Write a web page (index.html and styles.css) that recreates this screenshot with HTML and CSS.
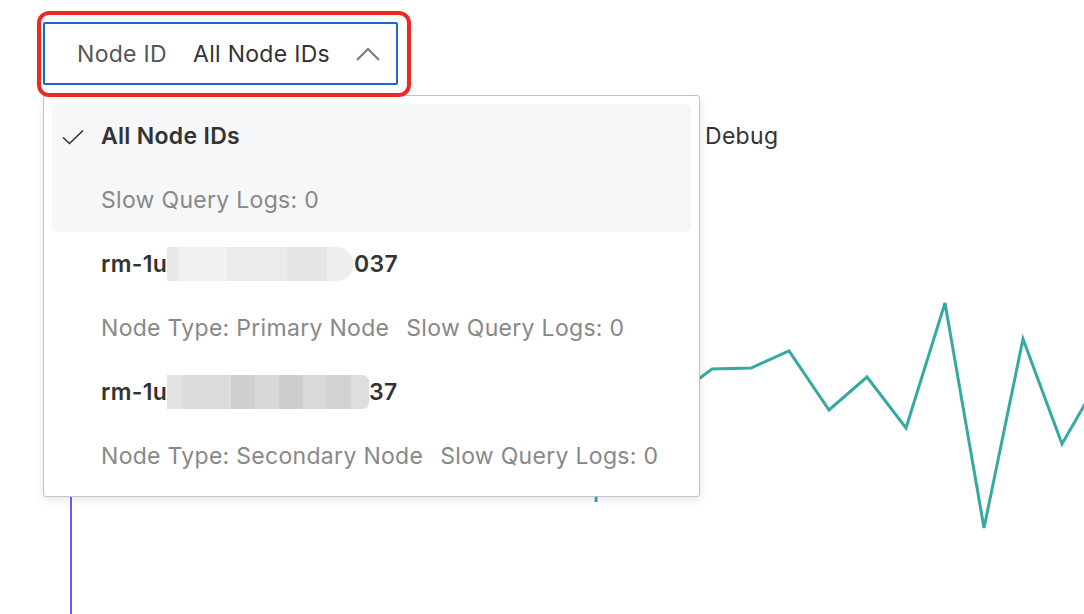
FILE: index.html
```html
<!DOCTYPE html>
<html lang="en">
<head>
    <meta charset="UTF-8">
    <meta name="viewport" content="width=device-width, initial-scale=1.0">
    <title>Slow Query Logs</title>
    <link rel="stylesheet" href="styles.css">
</head>
<body>
    <div class="toolbar">
        <div class="select-wrap">
            <div class="select">
                <span class="select-label">Node ID</span>
                <span class="select-value">All Node IDs</span>
                <svg class="chevron" width="24" height="14" viewBox="0 0 24 14">
                    <path d="M1 13 L12 2 L23 13" fill="none" stroke="#7a7a7a" stroke-width="2"/>
                </svg>
            </div>
            <div class="highlight-box"></div>

            <div class="dropdown">
                <div class="option selected">
                    <div class="option-title">
                        <svg class="check" width="22" height="16" viewBox="0 0 22 16">
                            <path d="M1 8.5 L7.5 14.5 L21 1.5" fill="none" stroke="#333" stroke-width="1.6"/>
                        </svg>
                        All Node IDs
                    </div>
                    <div class="option-meta">
                        <span>Slow Query Logs: 0</span>
                    </div>
                </div>
                <div class="option">
                    <div class="option-title">rm-1u<span class="redact redact-pill"></span>037</div>
                    <div class="option-meta">
                        <span>Node Type: Primary Node</span>
                        <span>Slow Query Logs: 0</span>
                    </div>
                </div>
                <div class="option">
                    <div class="option-title">rm-1u<span class="redact redact-blocks"></span>37</div>
                    <div class="option-meta">
                        <span>Node Type: Secondary Node</span>
                        <span>Slow Query Logs: 0</span>
                    </div>
                </div>
            </div>
        </div>
    </div>

    <div class="tabs">
        <span class="tab">Debug</span>
    </div>

    <svg class="chart" width="1084" height="463" viewBox="0 151 1084 463">
        <line x1="71" y1="300" x2="71" y2="614" stroke="#6a5cf5" stroke-width="2"/>
        <polyline fill="none" stroke="#36aaa2" stroke-width="3" stroke-linejoin="miter"
            points="596,502 598,440 700,378 712,369 751,368 789,351 829,410 867,377 906,428 945,303 984,528 1023,339 1062,444 1092,392"/>
    </svg>
</body>
</html>
```

FILE: styles.css
```css
body {
    margin: 0;
    background: #fff;
    font-family: 'Inter', 'Noto Sans', sans-serif;
    color: #333;
    overflow: hidden;
    height: 614px;
}

.toolbar {
    padding: 22px 0 0 43px;
}

.select-wrap {
    position: relative;
    width: 355px;
}

.select {
    box-sizing: border-box;
    height: 63px;
    border: 2px solid #1c68cc;
    border-radius: 2px;
    display: flex;
    align-items: center;
    padding-left: 32px;
    font-size: 23px;
    letter-spacing: 0.3px;
}
.select-label {
    color: #555;
    margin-right: 26px;
}
.select-value {
    color: #333;
}
.chevron {
    margin-left: auto;
    margin-right: 16px;
}

/* red annotation frame */
.highlight-box {
    position: absolute;
    left: -6px;
    top: -11px;
    width: 374px;
    height: 86px;
    box-sizing: border-box;
    border: 4px solid #ec2a24;
    border-radius: 12px;
    z-index: 3;
}

.dropdown {
    position: absolute;
    left: 0;
    top: 73px;
    width: 657px;
    box-sizing: border-box;
    padding: 8px;
    background: #fff;
    border: 1px solid #bfc3cc;
    border-radius: 3px;
    box-shadow: 0 3px 8px rgba(0, 0, 0, 0.1);
    z-index: 2;
    letter-spacing: 0.3px;
}

.option {
    border-radius: 5px;
    padding-left: 49px;
}
.option.selected {
    background: #f6f7f9;
}
.option-title {
    position: relative;
    height: 64px;
    display: flex;
    align-items: center;
    font-size: 23px;
    font-weight: 600;
    color: #333;
}
.check {
    position: absolute;
    left: -39px;
    top: 25px;
}
.option-meta {
    height: 64px;
    display: flex;
    align-items: center;
    gap: 17px;
    font-size: 23px;
    color: #888;
}

.redact {
    display: inline-block;
    height: 34px;
}
.redact-pill {
    width: 187px;
    border-radius: 0 17px 17px 0;
    background: linear-gradient(90deg, #e8e8e8 0, #e8e8e8 12px, #f1f1f1 12px, #f1f1f1 60px, #ebebeb 60px, #ebebeb 120px, #e6e6e6 120px, #e6e6e6 160px, #efefef 160px);
}
.redact-blocks {
    width: 202px;
    border-radius: 0 6px 6px 0;
    background: linear-gradient(90deg, #e2e2e2 0, #e2e2e2 16px, #dcdcdc 16px, #dcdcdc 64px, #cfcfcf 64px, #cfcfcf 88px, #d8d8d8 88px, #d8d8d8 112px, #cdcdcd 112px, #cdcdcd 136px, #d9d9d9 136px, #d9d9d9 160px, #d2d2d2 160px, #d2d2d2 184px, #dedede 184px);
}

.tabs {
    display: flex;
    padding-left: 705px;
    margin-top: 36px;
    height: 30px;
    align-items: center;
    font-size: 23px;
    letter-spacing: 0.3px;
    color: #333;
}

.chart {
    display: block;
}
```
